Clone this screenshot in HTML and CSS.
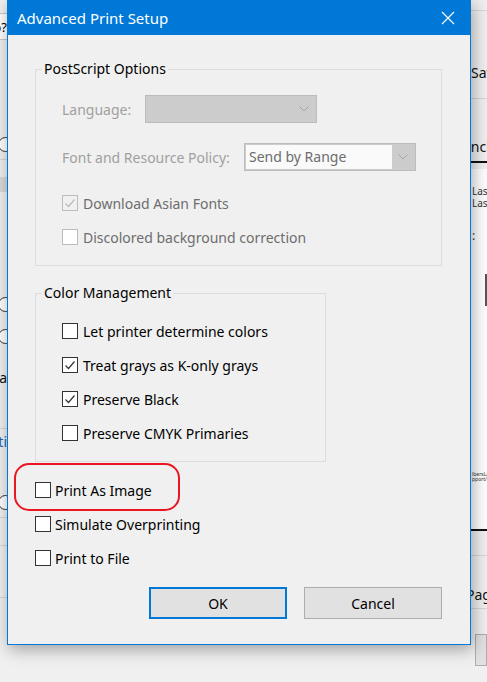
FILE: index.html
```html
<!DOCTYPE html>
<html lang="en">

<head>
    <meta charset="UTF-8">
    <meta name="viewport" content="width=device-width, initial-scale=1.0">
    <title>Advanced Print Setup</title>
    <link rel="stylesheet" href="styles.css">
</head>

<body>
    <!-- print window behind the dialog, only its edges show -->
    <div class="backdrop">
        <div class="side side-left">
            <div class="strip" style="height: 13px"></div>
            <div class="strip strip-field" style="height: 27px">p?</div>
            <div class="strip" style="height: 90px"></div>
            <div class="strip strip-line" style="height: 30px"><span class="radio"></span></div>
            <div class="strip" style="height: 17px"></div>
            <div class="strip strip-band" style="height: 15px"></div>
            <div class="strip" style="height: 97px"></div>
            <div class="strip" style="height: 30px"><span class="radio"></span></div>
            <div class="strip" style="height: 34px"><span class="radio"></span></div>
            <div class="strip" style="height: 11px"></div>
            <div class="strip strip-text" style="height: 26px">Boa</div>
            <div class="strip strip-line" style="height: 39px"></div>
            <div class="strip strip-text strip-link" style="height: 25px">Multi</div>
            <div class="strip" style="height: 34px"></div>
            <div class="strip strip-line" style="height: 30px"><span class="radio"></span></div>
            <div class="strip strip-line" style="height: 28px"></div>
            <div class="strip strip-line" style="height: 52px"></div>
        </div>
        <div class="side-mid"></div>
        <div class="side side-right">
            <div class="strip strip-line" style="height: 11px"></div>
            <div class="strip" style="height: 47px"></div>
            <div class="strip strip-text" style="height: 28px">Save</div>
            <div class="strip strip-line" style="height: 13px"></div>
            <div class="strip" style="height: 33px"></div>
            <div class="strip strip-text strip-tab" style="height: 31px"><span class="tab-label">Include</span></div>
            <div class="strip" style="height: 6px"></div>
            <div class="preview">
                <div class="preview-line">Laser</div>
                <div class="preview-line">Laser</div>
                <div class="preview-mark">:</div>
                <div class="preview-pic"></div>
                <div class="preview-tiny">lbersLam<br>pport/co</div>
            </div>
            <div class="strip strip-rule" style="height: 2px"></div>
            <div class="strip strip-line" style="height: 25px"></div>
            <div class="strip" style="height: 24px"></div>
            <div class="strip strip-text strip-line" style="height: 29px"><span class="tab-label">Page</span></div>
            <div class="strip" style="height: 25px"></div>
            <div class="strip strip-button" style="height: 32px"></div>
        </div>
    </div>

    <div class="dialog">
        <div class="titlebar">
            <span class="title">Advanced Print Setup</span>
            <svg class="close" width="14" height="14" viewBox="0 0 14 14">
                <path d="M1 1 L13 13 M13 1 L1 13" stroke="#fff" stroke-width="1.2" fill="none" />
            </svg>
        </div>

        <div class="dialog-body">
            <fieldset class="group group-ps">
                <legend>PostScript Options</legend>
                <div class="group-inner">
                    <div class="field">
                        <span class="field-label label-lang">Language:</span>
                        <div class="combo">
                            <span class="combo-value combo-empty"></span>
                            <span class="combo-arrow">
                                <svg width="10" height="6" viewBox="0 0 10 6"><path d="M0.5 0.5 L5 5 L9.5 0.5" stroke="#a6a6a6" fill="none" /></svg>
                            </span>
                        </div>
                    </div>
                    <div class="field">
                        <span class="field-label label-policy">Font and Resource Policy:</span>
                        <div class="combo">
                            <span class="combo-value">Send by Range</span>
                            <span class="combo-arrow">
                                <svg width="10" height="6" viewBox="0 0 10 6"><path d="M0.5 0.5 L5 5 L9.5 0.5" stroke="#a6a6a6" fill="none" /></svg>
                            </span>
                        </div>
                    </div>
                    <label class="check is-disabled">
                        <span class="box is-checked">
                            <svg width="14" height="14" viewBox="0 0 14 14"><path d="M2.5 7.5 L5.5 10.5 L11.5 3.5" stroke="#bcbcbc" stroke-width="1.2" fill="none" /></svg>
                        </span>
                        Download Asian Fonts
                    </label>
                    <label class="check is-disabled">
                        <span class="box"></span>
                        Discolored background correction
                    </label>
                </div>
            </fieldset>

            <fieldset class="group group-color">
                <legend>Color Management</legend>
                <div class="group-inner">
                    <label class="check"><span class="box"></span>Let printer determine colors</label>
                    <label class="check">
                        <span class="box">
                            <svg width="14" height="14" viewBox="0 0 14 14"><path d="M2.5 7.5 L5.5 10.5 L11.5 3.5" stroke="#333" stroke-width="1.2" fill="none" /></svg>
                        </span>
                        Treat grays as K-only grays
                    </label>
                    <label class="check">
                        <span class="box">
                            <svg width="14" height="14" viewBox="0 0 14 14"><path d="M2.5 7.5 L5.5 10.5 L11.5 3.5" stroke="#333" stroke-width="1.2" fill="none" /></svg>
                        </span>
                        Preserve Black
                    </label>
                    <label class="check"><span class="box"></span>Preserve CMYK Primaries</label>
                </div>
            </fieldset>

            <div class="extras">
                <label class="check check-marked"><span class="box"></span>Print As Image<span class="ring"></span></label>
                <label class="check"><span class="box"></span>Simulate Overprinting</label>
                <label class="check"><span class="box"></span>Print to File</label>
            </div>

            <div class="actions">
                <button class="btn btn-default">OK</button>
                <button class="btn">Cancel</button>
            </div>
        </div>
    </div>
</body>

</html>
```

FILE: styles.css
```css
body {
    margin: 0;
    width: 487px;
    height: 682px;
    overflow: hidden;
    position: relative;
    background: #f0f0f0;
    font-family: "Segoe UI", "Noto Sans", sans-serif;
    font-size: 14px;
    color: #000;
}

/* window in the background */
.backdrop {
    display: grid;
    grid-template-columns: 7px 464px 16px;
    height: 682px;
}

.side {
    display: flex;
    flex-direction: column;
    overflow: hidden;
}

.strip {
    flex: none;
    display: flex;
    align-items: center;
    box-sizing: border-box;
    white-space: nowrap;
    overflow: hidden;
}

.side-left .strip {
    justify-content: flex-end;
}

.strip-line {
    border-bottom: 1px solid #d6d6d6;
}

.strip-field {
    background: #fff;
    border-top: 1px solid #c8c8c8;
    border-bottom: 1px solid #c8c8c8;
    font-size: 13px;
}

.strip-band {
    background: #dadada;
}

.strip-text {
    font-size: 14px;
    color: #111;
}

.strip-link {
    color: #1e63b8;
}

.strip-tab {
    border-bottom: 2px solid #111;
}

.tab-label {
    margin-left: -5px;
}

.strip-rule {
    background: #111;
}

.strip-button {
    margin-left: 4px;
    background: #e1e1e1;
    border: 1px solid #adadad;
}

.radio {
    flex: none;
    width: 13px;
    height: 13px;
    margin-right: -6px;
    border: 1px solid #333;
    border-radius: 50%;
    background: #fff;
}

.preview {
    flex: none;
    height: 360px;
    background: #fff;
    padding: 16px 0 0 1px;
    box-sizing: border-box;
    font-size: 10px;
    color: #333;
    overflow: hidden;
}

.preview-line {
    line-height: 12px;
}

.preview-mark {
    margin-top: 18px;
    font-size: 12px;
}

.preview-pic {
    width: 3px;
    height: 32px;
    margin: 30px 0 0 13px;
    background: #555;
}

.preview-tiny {
    margin-top: 166px;
    font-size: 5px;
    line-height: 5px;
}

/* dialog */
.dialog {
    position: absolute;
    left: 7px;
    top: 0;
    width: 464px;
    height: 645px;
    box-sizing: border-box;
    border: 1px solid #0078d7;
    background: #f0f0f0;
    box-shadow: 2px 4px 16px rgba(0, 0, 0, 0.35);
}

.titlebar {
    height: 34px;
    display: flex;
    align-items: center;
    justify-content: space-between;
    padding: 0 15px 0 9px;
    background: #0078d7;
    color: #fff;
    font-size: 15px;
}

.close {
    flex: none;
}

.dialog-body {
    padding: 0 28px 0 27px;
}

.group {
    margin: 0;
    padding: 16px 8px 18px 6px;
    border: 1px solid #dcdcdc;
    min-width: 0;
}

.group legend {
    padding: 0 2px;
    line-height: 20px;
}

.group-inner {
    display: flex;
    flex-direction: column;
    gap: 14px;
    padding-left: 20px;
}

.group-ps {
    margin-top: 24px;
}

.group-color {
    margin-top: 17px;
    padding-top: 18px;
    width: 291px;
    box-sizing: border-box;
}

.field {
    display: flex;
    align-items: center;
    height: 28px;
    color: #a0a0a0;
}

.field + .field {
    margin-top: 6px;
}

.field + .check {
    margin-top: 8px;
}

.label-lang {
    width: 83px;
}

.label-policy {
    width: 182px;
}

.combo {
    display: flex;
    width: 172px;
    height: 28px;
    box-sizing: border-box;
    padding: 1px;
    border: 1px solid #bcbcbc;
    background: #cccccc;
}

.combo-value {
    flex: 1;
    padding-left: 3px;
    background: #fafafa;
    color: #6d6d6d;
    line-height: 24px;
}

.combo-empty {
    background: none;
}

.combo-arrow {
    width: 22px;
    display: flex;
    align-items: center;
    justify-content: center;
}

.check {
    display: flex;
    align-items: center;
    gap: 5px;
    height: 20px;
}

.check.is-disabled {
    color: #6d6d6d;
}

.box {
    flex: none;
    width: 16px;
    height: 16px;
    box-sizing: border-box;
    border: 1px solid #333;
    background: #fff;
    display: flex;
    align-items: center;
    justify-content: center;
}

.is-disabled .box {
    border-color: #bcbcbc;
}

.box.is-checked {
    background: #f0f0f0;
}

.extras {
    display: flex;
    flex-direction: column;
    gap: 14px;
    margin-top: 18px;
}

.extras .check {
    gap: 4px;
}

.check-marked {
    position: relative;
    align-self: flex-start;
}

.ring {
    position: absolute;
    left: -21px;
    top: -17px;
    width: 166px;
    height: 48px;
    box-sizing: border-box;
    border: 2px solid #ea1520;
    border-radius: 15px;
}

.actions {
    display: flex;
    justify-content: flex-end;
    gap: 17px;
    margin-top: 19px;
}

.btn {
    width: 138px;
    height: 32px;
    box-sizing: border-box;
    border: 1px solid #adadad;
    background: #e1e1e1;
    font-family: inherit;
    font-size: 14px;
    color: #000;
}

.btn-default {
    border: 2px solid #0078d7;
}
```
